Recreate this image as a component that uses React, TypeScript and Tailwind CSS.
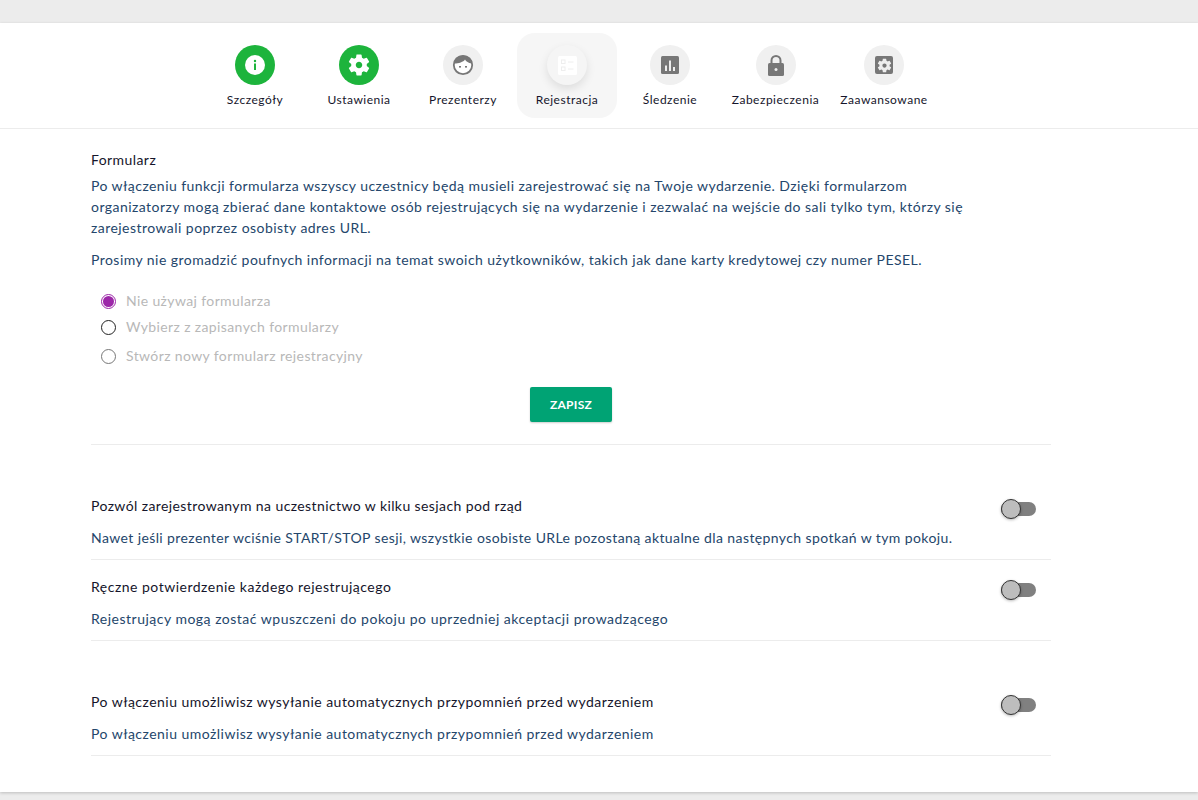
import type { ReactNode } from "react";

const font = "font-['Lato','Liberation_Sans',sans-serif]";

const gearPath =
  "M19.14 12.94c.04-.3.06-.61.06-.94 0-.32-.02-.64-.07-.94l2.03-1.58a.49.49 0 0 0 .12-.61l-1.92-3.32a.488.488 0 0 0-.59-.22l-2.39.96c-.5-.38-1.03-.7-1.62-.94l-.36-2.54a.484.484 0 0 0-.48-.41h-3.84c-.24 0-.43.17-.47.41l-.36 2.54c-.59.24-1.13.57-1.62.94l-2.39-.96c-.22-.08-.47 0-.59.22L2.74 8.87c-.12.21-.08.47.12.61l2.03 1.58c-.05.3-.09.63-.09.94s.02.64.07.94l-2.03 1.58a.49.49 0 0 0-.12.61l1.92 3.32c.12.22.37.29.59.22l2.39-.96c.5.38 1.03.7 1.62.94l.36 2.54c.05.24.24.41.48.41h3.84c.24 0 .44-.17.47-.41l.36-2.54c.59-.24 1.13-.56 1.62-.94l2.39.96c.22.08.47 0 .59-.22l1.92-3.32c.12-.22.07-.47-.12-.61l-2.01-1.58zM12 15c-1.65 0-3-1.35-3-3s1.35-3 3-3 3 1.35 3 3-1.35 3-3 3z";

function InfoIcon() {
  return (
    <svg width="20" height="20" viewBox="0 0 20 20">
      <circle cx="10" cy="10" r="10" fill="#fff" />
      <circle cx="10" cy="6" r="1.200" fill="#1db43c" />
      <rect x="9" y="8.500" width="2" height="6.500" fill="#1db43c" />
    </svg>
  );
}

function GearIcon({ size, color }: { size: number; color: string }) {
  return (
    <svg width={size} height={size} viewBox="0 0 24 24">
      <path d={gearPath} fill={color} fillRule="evenodd" />
    </svg>
  );
}

function FaceIcon() {
  return (
    <svg width="22" height="22" viewBox="0 0 22 22">
      <circle cx="11" cy="11" r="9.200" fill="#fff" stroke="#777" strokeWidth="1.800" />
      <path d="M2.500 9.500C3 5 6.500 1.500 11 1.500S19 5 19.500 9.500C16.500 9 14 7.500 13 5.500C11.500 8 6.500 9.500 2.500 9.500Z" fill="#777" />
      <rect x="7" y="12" width="2" height="1.600" fill="#777" />
      <rect x="13" y="12" width="2" height="1.600" fill="#777" />
    </svg>
  );
}

function FormIcon() {
  return (
    <svg width="19" height="19" viewBox="0 0 19 19">
      <rect width="19" height="19" rx="1.500" fill="#fff" />
      <rect x="3.500" y="4" width="3.500" height="3.500" fill="none" stroke="#eee" />
      <rect x="3.500" y="11" width="3.500" height="3.500" fill="none" stroke="#eee" />
      <path d="M10 6H15.500M10 13H15.500" stroke="#eee" />
    </svg>
  );
}

function ChartIcon() {
  return (
    <svg width="18" height="18" viewBox="0 0 18 18">
      <rect width="18" height="18" rx="1.500" fill="#777" />
      <path d="M4 9.500H6V15H4ZM8 4.500H10V15H8ZM12 11H14V15H12Z" fill="#eee" />
    </svg>
  );
}

function LockIcon() {
  return (
    <svg width="16" height="21" viewBox="0 0 16 21">
      <path d="M3.500 9V5.500A4.500 4.500 0 0 1 12.500 5.500V9" fill="none" stroke="#777" strokeWidth="2" />
      <rect y="8" width="16" height="13" rx="1.500" fill="#777" />
      <circle cx="8" cy="14.500" r="1.500" fill="#eee" />
    </svg>
  );
}

function GearBoxIcon() {
  return (
    <div className="flex h-[18px] w-[18px] items-center justify-center rounded-[2px] bg-[#777]">
      <GearIcon size={17} color="#eee" />
    </div>
  );
}

const tabs: { label: string; icon: ReactNode; width: string; green?: boolean; active?: boolean }[] = [
  { label: "Szczegóły", width: "w-[100px]", green: true, icon: <InfoIcon /> },
  { label: "Ustawienia", width: "w-[100px]", green: true, icon: <GearIcon size={26} color="#fff" /> },
  { label: "Prezenterzy", width: "w-[100px]", icon: <FaceIcon /> },
  { label: "Rejestracja", width: "w-[100px]", active: true, icon: <FormIcon /> },
  { label: "Śledzenie", width: "w-[98px]", icon: <ChartIcon /> },
  { label: "Zabezpieczenia", width: "w-[105px]", icon: <LockIcon /> },
  { label: "Zaawansowane", width: "w-[104px]", icon: <GearBoxIcon /> },
];

function Toggle() {
  return (
    <div className="relative h-[14px] w-[35px] shrink-0 rounded-full bg-[#808080]">
      <div className="absolute top-[-3px] left-0 h-[20px] w-[20px] rounded-full border-[1.5px] border-[#333] bg-[#bdbdbd] shadow-[0_1px_3px_rgba(0,0,0,0.3)]" />
    </div>
  );
}

function Radio({ label, state, className }: { label: string; state: "on" | "dark" | "off"; className: string }) {
  return (
    <div className={`flex items-center pl-[10px] text-[14px] leading-[20px] tracking-[0.38px] text-[#b8b8b8] ${className}`}>
      {state === "on" ? (
        <div className="mr-[10px] flex h-[15px] w-[15px] items-center justify-center rounded-full border border-[#9c27a8]">
          <div className="h-[11px] w-[11px] rounded-full bg-[#9c27a8]" />
        </div>
      ) : (
        <div
          className={
            state === "dark"
              ? "mr-[10px] h-[15px] w-[15px] rounded-full border-[1.5px] border-[#222]"
              : "mr-[10px] h-[15px] w-[15px] rounded-full border border-[#777]"
          }
        />
      )}
      {label}
    </div>
  );
}

function OptionRow({
  title,
  text,
  className,
  tracking,
}: {
  title: string;
  text: string;
  className: string;
  tracking: string;
}) {
  return (
    <div className={`border-b border-[#ececec] ${className}`}>
      <div className="flex items-start justify-between pr-[15px]">
        <div className={`text-[14px] leading-[20px] text-[#15152b] ${tracking}`}>{title}</div>
        <div className="mt-[6px]">
          <Toggle />
        </div>
      </div>
      <div className={`mt-[12px] pb-[11px] text-[14px] leading-[20px] text-[#24466b] ${tracking}`}>{text}</div>
    </div>
  );
}

export default function App() {
  return (
    <div className={`flex h-[800px] flex-col bg-[#ececec] pt-[23px] pb-[8px] ${font}`}>
      <div className="flex-1 bg-white shadow-[0_1px_3px_rgba(0,0,0,0.2)]">
        <div className="border-b border-[#ececec] pt-[10px] pb-[10px] pl-[205px]">
          <div className="flex gap-[4px]">
            {tabs.map((tab) => (
              <div
                key={tab.label}
                className={`flex h-[85px] flex-col items-center rounded-[18px] pt-[12px] ${tab.width} ${tab.active ? "bg-[#f6f6f6]" : ""}`}
              >
                <div
                  className={`flex h-[40px] w-[40px] items-center justify-center rounded-full ${tab.green ? "bg-[#1db43c]" : "bg-[#f0f0f0]"} ${tab.active ? "bg-[#f5f5f5] shadow-[0_4px_10px_rgba(0,0,0,0.1)]" : ""}`}
                >
                  {tab.icon}
                </div>
                <div className="mt-[7px] text-[12px] leading-[16px] tracking-[0.5px] whitespace-nowrap text-[#15152b]">{tab.label}</div>
              </div>
            ))}
          </div>
        </div>

        <div className="ml-[91px] w-[960px]">
          <div className="border-b border-[#ececec] pt-[21px] pb-[22px]">
            <div className="text-[14px] leading-[20px] tracking-[0.42px] text-[#15152b]">Formularz</div>
            <p className="mt-[5px] w-[890px] text-[14px] leading-[21px] tracking-[0.45px] text-[#24466b]">
              Po włączeniu funkcji formularza wszyscy uczestnicy będą musieli zarejestrować się na Twoje wydarzenie. Dzięki formularzom organizatorzy mogą zbierać dane kontaktowe osób rejestrujących się na wydarzenie i zezwalać na wejście do sali tylko tym, którzy się zarejestrowali poprzez osobisty adres URL.
            </p>
            <p className="mt-[11px] text-[14px] leading-[21px] tracking-[0.45px] text-[#24466b]">
              Prosimy nie gromadzić poufnych informacji na temat swoich użytkowników, takich jak dane karty kredytowej czy numer PESEL.
            </p>
            <Radio label="Nie używaj formularza" state="on" className="mt-[21px]" />
            <Radio label="Wybierz z zapisanych formularzy" state="dark" className="mt-[6px]" />
            <Radio label="Stwórz nowy formularz rejestracyjny" state="off" className="mt-[9px]" />
            <div className="mt-[21px] flex justify-center">
              <div className="flex h-[35px] w-[82px] items-center justify-center rounded-[2px] bg-[#00a374] text-[12px] font-bold tracking-[0.3px] text-white shadow-[0_1px_2px_rgba(0,0,0,0.2)]">
                ZAPISZ
              </div>
            </div>
          </div>

          <OptionRow
            className="pt-[51px]"
            tracking="tracking-[0.4px]"
            title="Pozwól zarejestrowanym na uczestnictwo w kilku sesjach pod rząd"
            text="Nawet jeśli prezenter wciśnie START/STOP sesji, wszystkie osobiste URLe pozostaną aktualne dla następnych spotkań w tym pokoju."
          />
          <OptionRow
            className="pt-[17px]"
            tracking="tracking-[0.5px]"
            title="Ręczne potwierdzenie każdego rejestrującego"
            text="Rejestrujący mogą zostać wpuszczeni do pokoju po uprzedniej akceptacji prowadzącego"
          />
          <OptionRow
            className="pt-[51px]"
            tracking="tracking-[0.47px]"
            title="Po włączeniu umożliwisz wysyłanie automatycznych przypomnień przed wydarzeniem"
            text="Po włączeniu umożliwisz wysyłanie automatycznych przypomnień przed wydarzeniem"
          />
        </div>
      </div>
    </div>
  );
}
